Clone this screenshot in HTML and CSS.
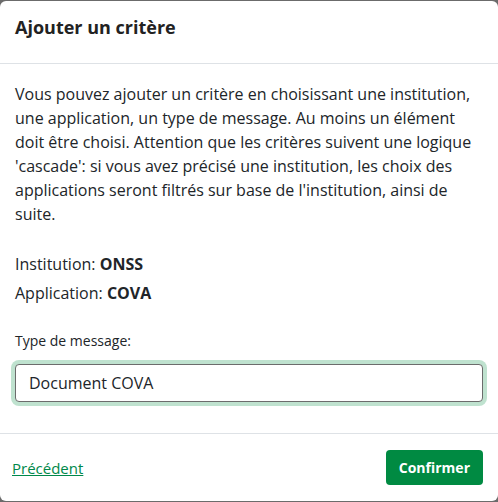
FILE: index.html
```html
<!DOCTYPE html>
<html lang="fr">
<head>
<meta charset="utf-8">
<title>Ajouter un critère</title>
<link rel="stylesheet" href="styles.css">
</head>
<body>
<div class="modal">
  <div class="modal-header">
    <h2 class="modal-title">Ajouter un critère</h2>
  </div>
  <div class="modal-body">
    <p class="intro">Vous pouvez ajouter un critère en choisissant une institution, une application, un type de message. Au moins un élément doit être choisi. Attention que les critères suivent une logique 'cascade': si vous avez précisé une institution, les choix des applications seront filtrés sur base de l'institution, ainsi de suite.</p>
    <p class="info">Institution: <strong>ONSS</strong></p>
    <p class="info">Application: <strong>COVA</strong></p>
    <label class="field-label" for="type">Type de message:</label>
    <input class="field-input" id="type" type="text" value="Document COVA">
  </div>
  <div class="modal-footer">
    <a class="link-back" href="#">Précédent</a>
    <button class="btn-confirm" type="button">Confirmer</button>
  </div>
</div>
</body>
</html>
```

FILE: styles.css
```css
* { box-sizing: border-box; }
html, body { margin: 0; padding: 0; }
body {
  background: #6b6b6b;
  font-family: "Open Sans", "Liberation Sans", sans-serif;
  color: #212529;
  height: 502px;
  overflow: hidden;
}
.modal {
  margin-top: 1px;
  height: 500px;
  background: #fff;
  border-radius: 6px;
  display: flex;
  flex-direction: column;
}
.modal-header {
  padding: 13px 15px 22px;
  border-bottom: 1px solid #dee2e6;
}
.modal-title {
  margin: 0;
  font-size: 18px;
  line-height: 27px;
  font-weight: 700;
  color: #222;
}
.modal-body {
  flex: 1;
  padding: 18px 15px 0;
  display: flex;
  flex-direction: column;
}
.modal-body p { margin: 0; font-size: 16px; line-height: 24px; }
.intro { margin-bottom: 26px !important; }
.info { margin-bottom: 5px !important; }
.info strong { font-weight: 700; }
.field-label {
  margin-top: 20px;
  font-size: 14px;
  line-height: 21px;
  margin-bottom: 13px;
}
.field-input {
  height: 38px;
  width: 100%;
  border: 1px solid #6c6c6c;
  border-radius: 4px;
  padding: 0 13px;
  font-family: inherit;
  font-size: 16px;
  color: #212529;
  box-shadow: 0 0 0 4px #bfe2cf;
  outline: none;
}
.modal-footer {
  border-top: 1px solid #dee2e6;
  padding: 16px 15px 16px 12px;
  display: flex;
  justify-content: space-between;
  align-items: center;
}
.link-back {
  color: #00884a;
  font-size: 15px;
  text-decoration: underline;
}
.btn-confirm {
  background: #008a42;
  color: #fff;
  border: none;
  border-radius: 4px;
  height: 35px;
  padding: 0 13px;
  font-family: inherit;
  font-size: 14px;
  font-weight: 700;
}
```
